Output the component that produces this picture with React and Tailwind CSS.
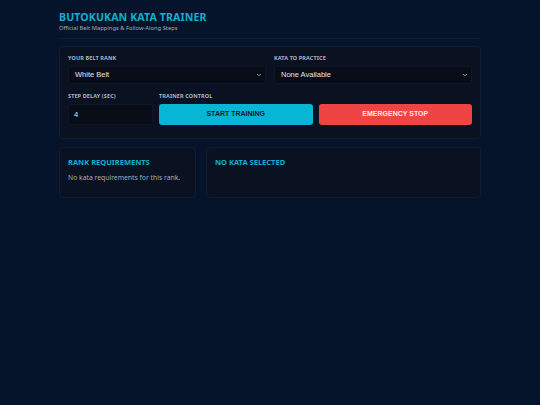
import { ChevronDown } from "lucide-react";

function Label({ children }) {
  return (
    <div className="text-[5.5px] leading-[7px] font-bold tracking-[0.02em] text-[#aab4c3] uppercase mb-[4px]">
      {children}
    </div>
  );
}

function Select({ value }) {
  return (
    <div className="h-[18px] rounded-[3px] bg-[#070c17] border border-[#0f1726] flex items-center justify-between pl-[6px] pr-[3px]">
      <span className="text-[7.5px] text-[#e5e7eb] font-['Liberation_Sans',Arial,sans-serif]">
        {value}
      </span>
      <ChevronDown size={6} strokeWidth={3} className="text-[#cbd5e1]" />
    </div>
  );
}

export default function App() {
  return (
    <div className="min-h-[405px] w-full bg-[#06142b] font-['Noto_Sans','Open_Sans',sans-serif]">
      <div className="w-[422px] mx-auto pt-[10px]">
        <div className="pb-[6px] border-b border-[#0e1d33]">
          <h1 className="text-[10.6px] leading-[14px] font-bold text-[#0fb0d0] tracking-[0.01em]">
            BUTOKUKAN KATA TRAINER
          </h1>
          <p className="text-[5.8px] leading-[8px] text-[#a3adbd]">
            Official Belt Mappings &amp; Follow-Along Steps
          </p>
        </div>

        <div className="mt-[7px] rounded-[4px] bg-[#0a1120] border border-[#121c2e] px-[8px] pt-[8px] pb-[13px]">
          <div className="grid grid-cols-2 gap-[8px]">
            <div>
              <Label>Your Belt Rank</Label>
              <Select value="White Belt" />
            </div>
            <div>
              <Label>Kata to Practice</Label>
              <Select value="None Available" />
            </div>
          </div>
          <div className="flex gap-[6px] mt-[9px]">
            <div className="w-[85px]">
              <Label>Step Delay (Sec)</Label>
              <div className="h-[21px] rounded-[3px] bg-[#070c17] border border-[#0f1726] flex items-center pl-[5px]">
                <span className="text-[7.5px] text-[#e5e7eb] font-['Liberation_Sans',Arial,sans-serif]">
                  4
                </span>
              </div>
            </div>
            <div className="flex-1">
              <Label>Trainer Control</Label>
              <div className="flex gap-[6px]">
                <button className="flex-1 h-[21px] rounded-[3px] bg-[#06b6d4] text-[#0b1a2a] text-[7px] font-bold font-['Liberation_Sans',Arial,sans-serif]">
                  START TRAINING
                </button>
                <button className="flex-1 h-[21px] rounded-[3px] bg-[#ef4444] text-[#fde8e8] text-[7px] font-bold font-['Liberation_Sans',Arial,sans-serif]">
                  EMERGENCY STOP
                </button>
              </div>
            </div>
          </div>
        </div>

        <div className="flex gap-[10px] mt-[8px]">
          <div className="w-[137px] h-[51px] rounded-[4px] bg-[#0a1120] border border-[#121c2e] px-[8px] pt-[9px]">
            <h2 className="text-[7.5px] leading-[10px] font-bold text-[#0fb0d0]">
              RANK REQUIREMENTS
            </h2>
            <p className="mt-[7px] text-[6.8px] leading-[8px] text-[#a3adbd]">
              No kata requirements for this rank.
            </p>
          </div>
          <div className="flex-1 h-[51px] rounded-[4px] bg-[#0a1120] border border-[#121c2e] px-[8px] pt-[9px]">
            <h2 className="text-[7.5px] leading-[10px] font-bold text-[#0fb0d0]">
              NO KATA SELECTED
            </h2>
          </div>
        </div>
      </div>
    </div>
  );
}
